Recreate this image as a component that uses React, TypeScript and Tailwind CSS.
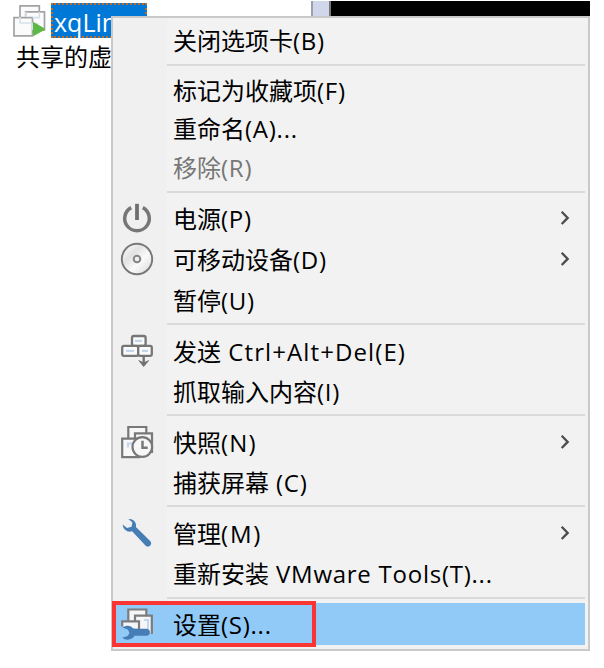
import React from 'react';

type Row =
  | { kind: 'sep'; size: string }
  | { kind: 'item'; size: string; zh: string; latin: string; tracking?: string; icon?: React.ReactNode; arrow?: boolean; disabled?: boolean; active?: boolean };

const PowerIcon = () => (
  <svg width="34" height="34" viewBox="0 0 34 34" fill="none">
    <path d="M11.2 6.6A12.3 12.3 0 1 0 22.8 6.6" stroke="#767676" strokeWidth="3.5" />
    <path d="M17 2.8V19" stroke="#707070" strokeWidth="3.8" />
  </svg>
);

const DiscIcon = () => (
  <svg width="34" height="34" viewBox="0 0 34 34">
    <defs>
      <linearGradient id="disc" x1="0" y1="0" x2="1" y2="1">
        <stop offset="0" stopColor="#fff" />
        <stop offset=".35" stopColor="#e2e2e2" />
        <stop offset=".6" stopColor="#fafafa" />
        <stop offset="1" stopColor="#d6d6d6" />
      </linearGradient>
    </defs>
    <circle cx="17" cy="17" r="15.2" fill="url(#disc)" stroke="#787878" strokeWidth="1.9" />
    <circle cx="17" cy="17" r="3.3" fill="#eee" stroke="#858585" strokeWidth="2" />
  </svg>
);

const KeysIcon = () => (
  <svg width="34" height="34" viewBox="0 0 34 34" stroke="#767676" strokeWidth="2.3" fill="#fafafa">
    <rect x="12" y="2" width="13.6" height="9.8" rx="1.8" />
    <rect x="2.2" y="11.8" width="16" height="10" rx="1.8" />
    <rect x="18.2" y="11.8" width="13.6" height="10" rx="1.8" />
    <path d="M15 6.8h7M6 16.8h8M22 16.8h6" stroke="#c3d6ee" />
    <path d="M23.7 22v9" fill="none" stroke="#707070" />
    <path d="M18.8 26.6l4.9 6 4.9-6-4.9 2.2Z" fill="#707070" stroke="#707070" strokeWidth="0.8" />
  </svg>
);

const SnapshotIcon = () => (
  <svg width="34" height="34" viewBox="0 0 34 34" stroke="#787878" strokeWidth="2.2" fill="#f7f7f7">
    <path d="M8.3 2h18v16h-18z" />
    <path d="M15 8.3h17V27H15z" />
    <path d="M2.2 13.6H19V32.2H2.2z" />
    <path d="M7 18.5h5M8 18.5v4" stroke="#c3d6ee" fill="none" />
    <circle cx="22.3" cy="22" r="9.8" />
    <path d="M22.5 15.8v7h5.2" fill="none" strokeWidth="2.5" />
  </svg>
);

const WrenchIcon = () => (
  <svg width="34" height="34" viewBox="0 0 34 34">
    <path d="M8.4 3.1C13.2 2.3 17 6.4 15.9 11.1L30.4 25.3C32.7 28.4 29.2 32.2 25.9 29.9L12.1 15.3C8.2 17 3.1 14.2 2.6 8.6L7 12.1L11.5 10.8L12.4 6.5Z" fill="#477db5" />
  </svg>
);

const SettingsIcon = () => (
  <svg width="34" height="34" viewBox="0 0 34 34">
    <g fill="#f4f6f8" stroke="#7c7c7c" strokeWidth="2.2">
      <path d="M8.3 2.5h18v16h-18z" />
      <path d="M31.8 27V8.6H15V20" />
      <path d="M2.2 19.5V14.3H19V22" />
    </g>
    <path d="M24 13h4v9" fill="none" stroke="#c3d6ee" strokeWidth="2" />
    <path d="M2.4 20.4C6.5 17.6 11.5 18.4 13.2 21.8H26.6C31.2 22 31 28.6 26.6 28.8H14.4C12.7 32.9 6.2 34 2.2 30.8L7.7 29.1L9.5 26L7.8 22.5Z" fill="#477db5" />
  </svg>
);

const MachineIcon = () => (
  <svg width="34" height="34" viewBox="0 0 34 34" className="shrink-0" fill="#fbfbfb" stroke="#a3a3a3" strokeWidth="1.7">
    <path d="M8 1.8H27.3V20H8z" />
    <path d="M13.7 7.8H32.5V26H13.7z" />
    <path d="M2 13.6H20.5V31.8H2z" />
    <path d="M8 13v6h12.5M14 8v5M20.5 13.6h6.8V8M20.5 26V20h6" stroke="#d6e1ee" fill="none" />
    <path d="M21.5 18.5L33 25.2L21.5 31.6Z" fill="#5cb946" stroke="#5cb946" strokeWidth="1" />
  </svg>
);

const rows: Row[] = [
  { kind: 'item', size: 'h-[38px]', zh: '关闭选项卡', latin: '(B)' },
  { kind: 'sep', size: 'pt-1 pb-1.5' },
  { kind: 'item', size: 'h-[38px]', zh: '标记为收藏项', latin: '(F)' },
  { kind: 'item', size: 'h-[38px]', zh: '重命名', latin: '(A)...' },
  { kind: 'item', size: 'h-[39px]', zh: '移除', latin: '(R)', disabled: true },
  { kind: 'sep', size: 'pt-1 pb-1.5' },
  { kind: 'item', size: 'h-10', zh: '电源', latin: '(P)', icon: <PowerIcon />, arrow: true },
  { kind: 'item', size: 'h-[41px]', zh: '可移动设备', latin: '(D)', icon: <DiscIcon />, arrow: true },
  { kind: 'item', size: 'h-[41px]', zh: '暂停', latin: '(U)' },
  { kind: 'sep', size: 'pt-0.5 pb-[7px]' },
  { kind: 'item', size: 'h-10', zh: '发送', latin: ' Ctrl+Alt+Del(E)', tracking: 'tracking-[1.1px]', icon: <KeysIcon /> },
  { kind: 'item', size: 'h-10', zh: '抓取输入内容', latin: '(I)' },
  { kind: 'sep', size: 'pt-0.5 pb-[7px]' },
  { kind: 'item', size: 'h-10', zh: '快照', latin: '(N)', tracking: 'tracking-[1.2px]', icon: <SnapshotIcon />, arrow: true },
  { kind: 'item', size: 'h-10', zh: '捕获屏幕', latin: ' (C)' },
  { kind: 'sep', size: 'pt-0.5 pb-[7px]' },
  { kind: 'item', size: 'h-10', zh: '管理', latin: '(M)', tracking: 'tracking-[1.8px]', icon: <WrenchIcon />, arrow: true },
  { kind: 'item', size: 'h-10', zh: '重新安装', latin: ' VMware Tools(T)...' },
  { kind: 'sep', size: 'pt-[3px] pb-1' },
  { kind: 'item', size: 'h-[42px] pt-0.5', zh: '设置', latin: '(S)...', icon: <SettingsIcon />, active: true },
];

function MenuRow({ row }: { row: Row }) {
  if (row.kind === 'sep') {
    return (
      <div className={`pl-[54px] ${row.size}`}>
        <div className="h-0.5 bg-[#dadada]" />
      </div>
    );
  }
  return (
    <div className={`flex items-center ${row.size} ${row.active ? 'bg-[#91c9f7]' : ''} ${row.disabled ? 'text-[#777]' : 'text-black'}`}>
      <div className="flex w-[60px] shrink-0 pb-0.5 pl-[7px]">{row.icon}</div>
      <div className="flex-1 whitespace-pre text-[24px] leading-8">
        <span>{row.zh}</span>
        <span className={row.tracking ?? 'tracking-[0.75px]'}>{row.latin}</span>
      </div>
      {row.arrow && (
        <svg width="12" height="16" viewBox="0 0 12 16" className="mr-3.5 mb-0.5 shrink-0" fill="none">
          <path d="M2.7 1.8L8.7 7.9L2.7 14" stroke="#4c4c4c" strokeWidth="2.3" />
        </svg>
      )}
    </div>
  );
}

export default function App() {
  return (
    <div className="relative h-[668px] w-[604px] overflow-hidden bg-white font-['Open_Sans','Noto_Sans_CJK_SC',sans-serif] text-black">
      <div className="flex h-full">
        <div className="w-[311px] pl-3 pt-[3px]">
          <div className="flex h-[35px]">
            <div className="pt-px"><MachineIcon /></div>
            <div className="ml-[5px] h-[35px] w-24 border-2 border-dotted border-[#c96b1c] bg-[#0078d7] pl-px text-[25px] leading-[34px] text-white">xqLinux</div>
          </div>
          <div className="pl-1 text-[24px] leading-[38px] whitespace-nowrap">共享的虚拟机</div>
        </div>
        <div className="mt-px h-4 w-5 border-l-2 border-r-2 border-l-[#9ba0ad] border-r-[#777] bg-[#d0d7eb]" />
        <div className="mt-px h-4 w-[259px] bg-black" />
      </div>
      <div className="absolute left-[111px] top-4 flex h-[635px] w-[479px] flex-col border-2 border-[#c9c9c9] bg-[#f2f2f2] bg-[linear-gradient(90deg,#f0f0f0_54px,#f2f2f2_54px)] pt-1 pr-[3px]">
        {rows.map((row, i) => (
          <MenuRow key={i} row={row} />
        ))}
      </div>
      <div className="absolute left-[112px] top-[601px] h-[46px] w-[204px] border-4 border-[#fb3434]" />
    </div>
  );
}
